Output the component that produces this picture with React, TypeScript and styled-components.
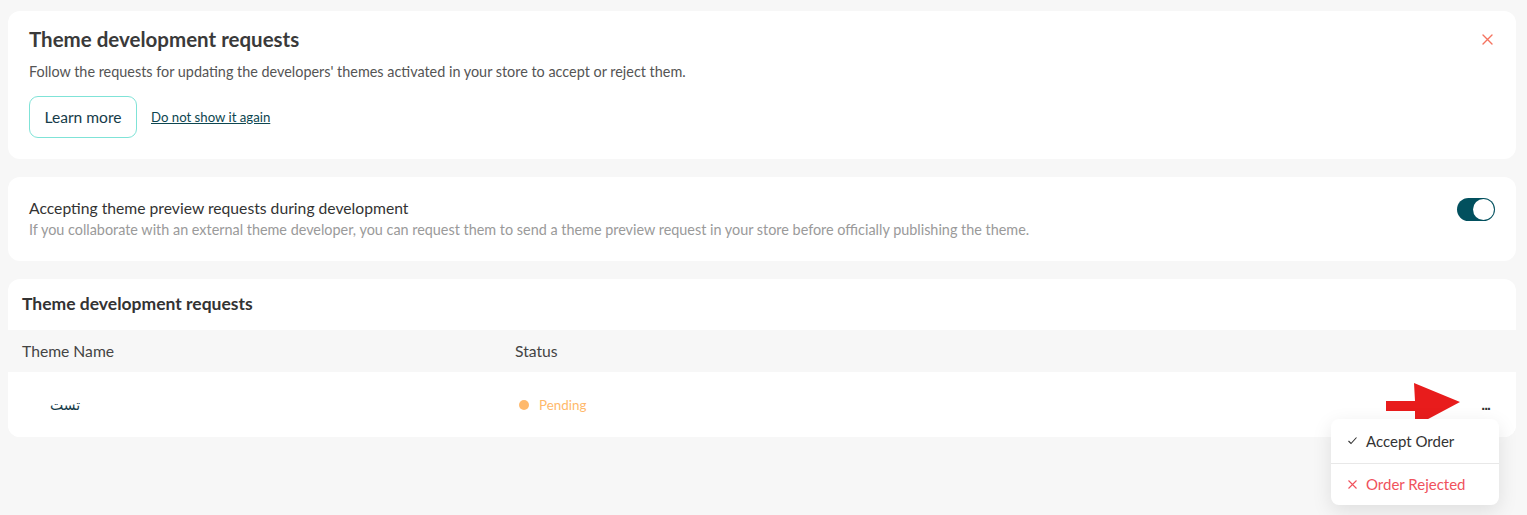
import React from "react";
import styled, { createGlobalStyle } from "styled-components";

const Global = createGlobalStyle`
  html, body { margin: 0; padding: 0; background: #f7f7f7; }
  body { font-family: "Lato", "Noto Sans", sans-serif; color: #333; }
  * { box-sizing: border-box; }
`;

const Page = styled.div`
  display: flex;
  flex-direction: column;
  gap: 18px;
  padding: 11px 11px 0 8px;
  min-height: 515px;
`;

const Card = styled.section`
  background: #fff;
  border-radius: 12px;
  position: relative;
`;

const IntroCard = styled(Card)`
  height: 148px;
  padding: 15px 21px 0 21px;
  display: flex;
  flex-direction: column;
`;

const IntroTitle = styled.h2`
  margin: 0;
  font-size: 20.5px;
  font-weight: 700;
  color: #3a3a3a;
  line-height: 26px;
`;

const IntroText = styled.p`
  margin: 11px 0 0;
  font-size: 14.4px;
  color: #555;
  line-height: 18px;
`;

const Actions = styled.div`
  display: flex;
  align-items: center;
  gap: 14px;
  margin-top: 15px;
`;

const OutlineButton = styled.button`
  height: 42px;
  width: 108px;
  padding: 0;
  border: 1px solid #7fe3d7;
  border-radius: 9px;
  background: #fff;
  font-family: inherit;
  font-size: 15.6px;
  color: #163c4a;
  cursor: pointer;
`;

const TextLink = styled.a`
  font-size: 13.2px;
  color: #0d4650;
  text-decoration: underline;
  cursor: pointer;
`;

const CloseButton = styled.button`
  position: absolute;
  top: 19px;
  right: 20px;
  width: 18px;
  height: 18px;
  padding: 0;
  border: 0;
  background: transparent;
  display: flex;
  align-items: center;
  justify-content: center;
  cursor: pointer;
`;

const SettingCard = styled(Card)`
  height: 84px;
  display: flex;
  align-items: flex-start;
  justify-content: space-between;
  padding: 21px 21px 0 21px;
`;

const SettingText = styled.div`
  display: flex;
  flex-direction: column;
  gap: 2px;
`;

const SettingTitle = styled.div`
  font-size: 15.7px;
  font-weight: 400;
  color: #333;
  line-height: 20px;
`;

const SettingHint = styled.div`
  font-size: 14.4px;
  color: #9a9a9a;
  line-height: 20px;
`;

const Switch = styled.button<{ $on: boolean }>`
  width: 38px;
  height: 23px;
  border-radius: 12px;
  border: 0;
  padding: 0;
  background: ${(p) => (p.$on ? "#02505e" : "#ccc")};
  position: relative;
  cursor: pointer;
  &::after {
    content: "";
    position: absolute;
    top: 1px;
    ${(p) => (p.$on ? "right: 1px;" : "left: 1px;")}
    width: 21px;
    height: 21px;
    border-radius: 50%;
    background: #fff;
  }
`;

const TableCard = styled(Card)`
  display: flex;
  flex-direction: column;
`;

const TableTitle = styled.h3`
  margin: 0;
  height: 51px;
  padding: 14px 14px 0;
  font-size: 17.5px;
  font-weight: 700;
  color: #333;
  line-height: 22px;
`;

const Row = styled.div<{ $head?: boolean }>`
  display: grid;
  grid-template-columns: 493px 1fr 60px;
  align-items: center;
  padding: 0 14px;
  height: ${(p) => (p.$head ? "42px" : "65px")};
  background: ${(p) => (p.$head ? "#f7f7f7" : "#fff")};
  border-radius: ${(p) => (p.$head ? "0" : "0 0 12px 12px")};
  font-size: 15.7px;
  color: #444;
`;

const NameCell = styled.div`
  padding-left: 28px;
  text-align: left;
  font-family: "Noto Sans", "DejaVu Sans", sans-serif;
  font-size: 14px;
  color: #163c4a;
`;

const StatusCell = styled.div<{ $color: string }>`
  display: flex;
  align-items: center;
  gap: 10px;
  padding-left: 4px;
  font-size: 13.4px;
  color: ${(p) => p.$color};
  &::before {
    content: "";
    width: 10px;
    height: 10px;
    border-radius: 50%;
    background: ${(p) => p.$color};
  }
`;

const MenuCell = styled.div`
  position: relative;
  display: flex;
  justify-content: flex-end;
  padding-right: 12px;
`;

const DotsButton = styled.button`
  border: 0;
  background: transparent;
  padding: 0;
  font-size: 14px;
  font-weight: 700;
  color: #333;
  letter-spacing: -1px;
  cursor: pointer;
  line-height: 10px;
  margin-top: 0;
`;

const Menu = styled.div`
  position: absolute;
  top: 19px;
  right: 3px;
  width: 168px;
  background: #fff;
  border-radius: 8px;
  box-shadow: 0 6px 20px rgba(0, 0, 0, 0.1);
  display: flex;
  flex-direction: column;
  z-index: 2;
`;

const MenuItem = styled.div<{ $danger?: boolean }>`
  display: flex;
  align-items: center;
  gap: 8px;
  height: ${(p) => (p.$danger ? "42px" : "44px")};
  padding: 0 16px;
  font-size: 15px;
  color: ${(p) => (p.$danger ? "#f0525c" : "#333")};
  & + & {
    border-top: 1px solid #e8e8e8;
  }
`;

const Arrow = styled.svg`
  position: absolute;
  left: -56px;
  top: -17px;
  z-index: 1;
`;

export default function App() {
  return (
    <>
      <Global />
      <Page>
        <IntroCard>
          <IntroTitle>Theme development requests</IntroTitle>
          <IntroText>
            Follow the requests for updating the developers' themes activated in your store to accept or reject them.
          </IntroText>
          <Actions>
            <OutlineButton>Learn more</OutlineButton>
            <TextLink>Do not show it again</TextLink>
          </Actions>
          <CloseButton aria-label="close">
            <svg width="11" height="11" viewBox="0 0 11 11">
              <path d="M1 1L10 10M10 1L1 10" stroke="#f5735f" strokeWidth="1.4" strokeLinecap="round" />
            </svg>
          </CloseButton>
        </IntroCard>

        <SettingCard>
          <SettingText>
            <SettingTitle>Accepting theme preview requests during development</SettingTitle>
            <SettingHint>
              If you collaborate with an external theme developer, you can request them to send a theme preview request in your store before officially publishing the theme.
            </SettingHint>
          </SettingText>
          <Switch $on aria-label="toggle" />
        </SettingCard>

        <TableCard>
          <TableTitle>Theme development requests</TableTitle>
          <Row $head>
            <div>Theme Name</div>
            <div>Status</div>
            <div />
          </Row>
          <Row>
            <NameCell dir="rtl">تست</NameCell>
            <StatusCell $color="#ffb96b">Pending</StatusCell>
            <MenuCell>
              <Arrow width="76" height="44" viewBox="0 0 76 44">
                <polygon points="0,18 29,18 28,0 74,19 29,43 29,28 0,28" fill="#e81c1c" />
              </Arrow>
              <DotsButton>...</DotsButton>
              <Menu>
                <MenuItem>
                  <svg width="11" height="11" viewBox="0 0 11 11">
                    <path d="M1.5 6L4 8.5L9.5 2.5" stroke="#333" strokeWidth="1.1" fill="none" />
                  </svg>
                  Accept Order
                </MenuItem>
                <MenuItem $danger>
                  <svg width="11" height="11" viewBox="0 0 11 11">
                    <path d="M1.5 1.5L9.5 9.5M9.5 1.5L1.5 9.5" stroke="#f0525c" strokeWidth="1.1" />
                  </svg>
                  Order Rejected
                </MenuItem>
              </Menu>
            </MenuCell>
          </Row>
        </TableCard>
      </Page>
    </>
  );
}
